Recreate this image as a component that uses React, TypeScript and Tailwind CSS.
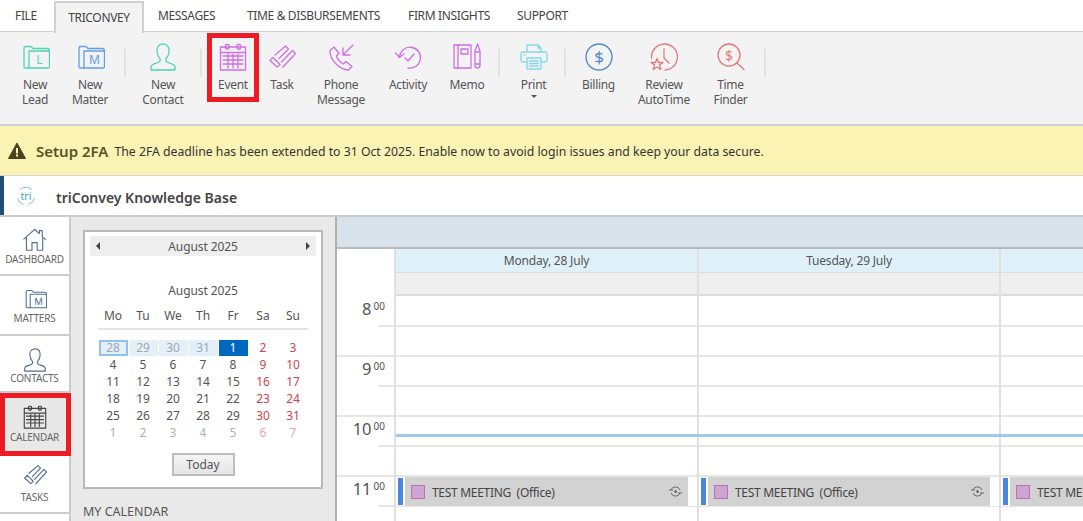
import React from "react";

type IconProps = { c: string };
const S = ({ c, children, w = 28, h = 28 }: { c: string; children: React.ReactNode; w?: number; h?: number }) => (
  <svg width={w} height={h} viewBox={`0 0 ${w} ${h}`} fill="none" stroke={c} strokeWidth={1.3} strokeLinejoin="round" strokeLinecap="round">
    {children}
  </svg>
);

const Folder = ({ c, letter }: { c: string; letter: string }) => (
  <S c={c} w={30} h={28}>
    <path d="M9 25H5.5Q4 25 4 23.5V5Q4 3.5 5.5 3.5H11L13 5.5H27Q29.5 5.5 29.5 8" />
    <path d="M9 25V8H28Q29.5 8 29.5 9.5V23.5Q29.5 25 28 25Z" />
    <text x="19.5" y="21" textAnchor="middle" fontSize="12" fill={c} stroke="none" fontFamily="'Noto Sans', sans-serif">{letter}</text>
  </S>
);

const Person = ({ c }: IconProps) => (
  <S c={c}>
    <path d="M2 27V24C2 21 6 20.5 9 19.5C11 18.8 11.5 17 11 15.5C9 13.5 8 10.5 8 7.5C8 3.5 10.5 1 14 1C17.5 1 20 3.5 20 7.5C20 10.5 19 13.5 17 15.5C16.5 17 17 18.8 19 19.5C22 20.5 26 21 26 24V27Z" />
  </S>
);

const Calendar = ({ c }: IconProps) => (
  <S c={c}>
    <rect x="1.5" y="4" width="25" height="23" />
    <path d="M1.5 9.5H26.5" />
    <rect x="6.5" y="1.5" width="3.5" height="4.5" rx="1" />
    <rect x="18" y="1.5" width="3.5" height="4.5" rx="1" />
    <path d="M4 13H24M4 17H24M4 21H24M9 11V25M14 11V25M19 11V25" />
  </S>
);

const Task = ({ c }: IconProps) => (
  <S c={c}>
    <path d="M2 17.5L5 14.5L12 21.5L9 24Z" />
    <path d="M7 12L17.5 3L20.5 6L11 15.5" />
    <path d="M13.5 19L24.5 7.5L27.5 10.5L15 24" />
  </S>
);

const Phone = ({ c }: IconProps) => (
  <S c={c}>
    <path d="M3 7.5L7 4L12 10.5L9.5 13C10.5 16 13.5 19.5 16.5 21L19 18.5L25 23.5L21.5 27C13 27 2.5 17 3 7.5Z" />
    <path d="M26 2L16 12M16 5V12H23" />
  </S>
);

const Activity = ({ c }: IconProps) => (
  <S c={c}>
    <path d="M5.5 14A10.5 10.5 0 1 1 14 25" />
    <path d="M1.5 10L5.5 14.5L10 11" />
    <path d="M11 15L14 18L20 11" />
  </S>
);

const Memo = ({ c }: IconProps) => (
  <S c={c}>
    <rect x="1" y="2" width="17" height="23" />
    <path d="M5 2V25" />
    <rect x="8" y="6" width="7" height="5" />
    <path d="M22 8L24.5 1L27 8V22.5Q27 25 24.5 25Q22 25 22 22.5ZM22 9H27M22 21H27" />
  </S>
);

const Printer = ({ c }: IconProps) => (
  <S c={c}>
    <path d="M7 9V2H18L21 5V9M18 2V5H21" />
    <path d="M7 19H3Q1 19 1 17V11Q1 9 3 9H25Q27 9 27 11V17Q27 19 25 19H21" />
    <rect x="7" y="15" width="14" height="11" />
    <path d="M9.5 18H18.5M9.5 20.5H18.5M9.5 23H18.5M4 12H5" />
  </S>
);

const Billing = ({ c }: IconProps) => (
  <S c={c}>
    <circle cx="14" cy="14" r="13" />
    <text x="14" y="20" textAnchor="middle" fontSize="17" fill={c} stroke="none" fontFamily="'Noto Sans', sans-serif">$</text>
  </S>
);

const AutoTime = ({ c }: IconProps) => (
  <S c={c}>
    <path d="M1.5 15A13 13 0 1 1 15 27" />
    <path d="M14 6V15L19 20" />
    <path d="M7 15.5L8.5 19.5H13L9.5 22L10.8 26.5L7 24L3.2 26.5L4.5 22L1 19.5H5.5Z" />
  </S>
);

const Finder = ({ c }: IconProps) => (
  <S c={c}>
    <circle cx="12" cy="12" r="11" />
    <path d="M20 20L27 26.5" />
    <text x="12" y="18" textAnchor="middle" fontSize="14" fill={c} stroke="none" fontFamily="'Noto Sans', sans-serif">$</text>
  </S>
);

const HomeIcon = () => (
  <S c="#4f6f8f">
    <path d="M1 13L13.5 1.5L19 6.5V3H22.5V10L26.5 13.5M4 11V26H10.5V17H16.5V26H23V11" />
  </S>
);

const Sep = ({ cls }: { cls: string }) => (
  <div className={`flex justify-center pt-[17px] ${cls}`}>
    <div className="h-[28px] w-[2px] bg-[#e2e2e2]" />
  </div>
);

const Item = ({ cls, icon, lines, red, caret }: { cls: string; icon: React.ReactNode; lines: string[]; red?: boolean; caret?: boolean }) => (
  <div className={`relative flex flex-col items-center pt-[11px] ${cls}`}>
    <div className="flex h-[28px] items-center justify-center">{icon}</div>
    <div className="mt-[6px] text-center text-[12px] leading-[15px] tracking-[-0.3px] text-[#555]">
      {lines.map((l) => (
        <div key={l} className="whitespace-nowrap">{l}</div>
      ))}
      {caret && (
        <div className="flex justify-center pt-[3px]">
          <div className="h-0 w-0 border-x-[3px] border-t-[3px] border-x-transparent border-t-[#555]" />
        </div>
      )}
    </div>
    {red && <div className="absolute inset-x-0 top-[1px] h-[69px] border-[5px] border-[#ed1c24]" />}
  </div>
);

const Ribbon = () => (
  <div className="flex h-[92px] bg-[#f3f3f3]">
    <div className="w-[8px]" />
    <Item cls="w-[54px]" icon={<Folder c="#4fd4b4" letter="L" />} lines={["New", "Lead"]} />
    <Item cls="w-[56px]" icon={<Folder c="#5f9ee8" letter="M" />} lines={["New", "Matter"]} />
    <Sep cls="w-[13px]" />
    <Item cls="w-[64px]" icon={<Person c="#4fd4b4" />} lines={["New", "Contact"]} />
    <Sep cls="w-[12px]" />
    <Item cls="w-[52px]" icon={<Calendar c="#d06fe6" />} lines={["Event"]} red />
    <Item cls="w-[46px]" icon={<Task c="#d06fe6" />} lines={["Task"]} />
    <Item cls="w-[72px]" icon={<Phone c="#d06fe6" />} lines={["Phone", "Message"]} />
    <Item cls="w-[62px]" icon={<Activity c="#d06fe6" />} lines={["Activity"]} />
    <Item cls="w-[56px]" icon={<Memo c="#d06fe6" />} lines={["Memo"]} />
    <Sep cls="w-[8px]" />
    <Item cls="w-[61px]" icon={<Printer c="#85d8e6" />} lines={["Print"]} caret />
    <Sep cls="w-[2px]" />
    <Item cls="w-[65px]" icon={<Billing c="#4f86d2" />} lines={["Billing"]} />
    <Item cls="w-[66px]" icon={<AutoTime c="#e57878" />} lines={["Review", "AutoTime"]} />
    <Item cls="w-[67px]" icon={<Finder c="#e57878" />} lines={["Time", "Finder"]} />
    <Sep cls="w-[2px]" />
  </div>
);

const Tabs = () => (
  <div className="flex h-[32px] items-center border-b border-[#d0d0d0] bg-white pl-[15px] pt-[1px] text-[12px] tracking-[-0.35px] text-[#444]">
    <span className="w-[39px]">FILE</span>
    <div className="-mb-[1px] flex h-[32px] w-[90px] items-center justify-center border-x-2 border-t-2 border-[#d0d0d0] bg-[#f3f3f3]">TRICONVEY</div>
    <span className="ml-[14px] w-[89px]">MESSAGES</span>
    <span className="w-[161px] whitespace-nowrap">TIME &amp; DISBURSEMENTS</span>
    <span className="w-[109px] whitespace-nowrap">FIRM INSIGHTS</span>
    <span>SUPPORT</span>
  </div>
);

const Alert = () => (
  <div className="flex h-[52px] items-center border-t-2 border-b border-t-[#cfcfcf] border-b-[#d8d8c8] bg-[#fbf3b4] pl-[8px]">
    <svg width="18" height="17" viewBox="0 0 18 17">
      <path d="M9 1L17.5 16.5H.5Z" fill="#4a4320" stroke="#4a4320" strokeLinejoin="round" />
      <rect x="8" y="6" width="2" height="5.5" fill="#fbf3b4" />
      <rect x="8" y="12.5" width="2" height="2" fill="#fbf3b4" />
    </svg>
    <span className="ml-[10px] pt-[1px] text-[15px] font-semibold text-[#5a5226]">Setup 2FA</span>
    <span className="ml-[6px] whitespace-nowrap pt-[4px] text-[12.25px] text-[#333]">The 2FA deadline has been extended to 31 Oct 2025. Enable now to avoid login issues and keep your data secure.</span>
  </div>
);

const Kb = () => (
  <div className="flex h-[41px] items-center border-b-2 border-[#cccccc] bg-white">
    <div className="h-full w-[4px] bg-[#1f4e79]" />
    <svg width="20" height="20" viewBox="0 0 20 20" className="ml-[12px]" fill="none">
      <path d="M4 3.5A9 9 0 0 1 16 3.5M18.5 12A9 9 0 0 1 12.5 18.5M7.5 18.5A9 9 0 0 1 1.5 12" stroke="#79c3ee" strokeWidth="1" />
      <text x="10" y="13.5" textAnchor="middle" fontSize="10.5" fill="#3f9fdc" fontFamily="'Noto Sans', sans-serif">tri</text>
    </svg>
    <span className="ml-[20px] pt-[3px] text-[14px] font-semibold text-[#444]">triConvey Knowledge Base</span>
  </div>
);

const Nav = ({ label, icon, cls, active, gap }: { label: string; icon: React.ReactNode; cls: string; active?: boolean; gap: string }) => (
  <div className={`relative flex flex-col items-center ${cls} ${active ? "bg-[#e8e8e8]" : "border-b-2 border-[#cccccc] bg-white"}`}>
    <div className="flex h-[28px] items-center [&_svg]:h-[24px] [&_svg]:w-[24px]">{icon}</div>
    <div className={`text-[10px] leading-[14px] tracking-[-0.2px] text-[#666] ${gap}`}>{label}</div>
    {active && <div className="absolute inset-y-0 left-0 -right-[2px] border-[5px] border-[#ed1c24]" />}
  </div>
);

const Sidebar = () => (
  <div className="w-[71px] shrink-0 border-r-2 border-[#cccccc] bg-white">
    <Nav label="DASHBOARD" cls="h-[59px] pt-[9px]" gap="-mt-[2px]" icon={<HomeIcon />} />
    <Nav label="MATTERS" cls="h-[60px] pt-[9px]" gap="-mt-[2px]" icon={<Folder c="#4f6f8f" letter="M" />} />
    <Nav label="CONTACTS" cls="h-[57px] pt-[10px]" gap="-mt-[3px]" icon={<Person c="#4f6f8f" />} />
    <Nav label="CALENDAR" cls="h-[63px] pt-[10px]" gap="-mt-[1px]" active icon={<Calendar c="#444" />} />
    <Nav label="TASKS" cls="h-[58px] pt-[5px]" gap="mt-[1px]" icon={<Task c="#4f6f8f" />} />
  </div>
);

type Cell = [string, string];
const g = "text-[#b0b0b0]";
const d = "text-[#555]";
const r = "text-[#d2434f]";
const pr = "text-[#eda5a5]";
const rows: Cell[][] = [
  [["4", d], ["5", d], ["6", d], ["7", d], ["8", d], ["9", r], ["10", r]],
  [["11", d], ["12", d], ["13", d], ["14", d], ["15", d], ["16", r], ["17", r]],
  [["18", d], ["19", d], ["20", d], ["21", d], ["22", d], ["23", r], ["24", r]],
  [["25", d], ["26", d], ["27", d], ["28", d], ["29", d], ["30", r], ["31", r]],
  [["1", g], ["2", g], ["3", g], ["4", g], ["5", g], ["6", pr], ["7", pr]],
];

const MiniCal = () => (
  <div className="h-[259px] w-[240px] border-2 border-[#b8b8b8] bg-white px-[5px] pt-[4px]">
    <div className="flex h-[20px] items-center justify-between bg-[#efefef] px-[6px] text-[12px] tracking-[-0.1px] text-[#555]">
      <div className="h-0 w-0 border-y-[4px] border-r-[4px] border-y-transparent border-r-[#444]" />
      <span className="pt-[2px]">August 2025</span>
      <div className="h-0 w-0 border-y-[4px] border-l-[4px] border-y-transparent border-l-[#444]" />
    </div>
    <div className="mt-[27px] text-center text-[12px] leading-[16px] tracking-[-0.1px] text-[#555]">August 2025</div>
    <div className="mx-[8px] mt-[8px]">
      <div className="grid grid-cols-7 border-b-2 border-[#e4e4e4] pb-[4px] text-center text-[12px] leading-[17px] text-[#555]">
        {["Mo", "Tu", "We", "Th", "Fr", "Sa", "Su"].map((x) => <span key={x}>{x}</span>)}
      </div>
      <div className="mt-[10px] grid grid-cols-7 text-center text-[12px] leading-[16px]">
        <div className="mx-[0.5px] border-2 border-[#8fc3ea] bg-[#e3eff9] leading-[12px] text-[#a0a8b0]">28</div>
        <div className="mx-[0.5px] bg-[#e3eff9] text-[#a0a8b0]">29</div>
        <div className="mx-[0.5px] bg-[#e3eff9] text-[#a0a8b0]">30</div>
        <div className="mx-[0.5px] bg-[#e3eff9] text-[#a0a8b0]">31</div>
        <div className="mx-[0.5px] bg-[#0067c0] text-white">1</div>
        <div className="text-[#d2434f]">2</div>
        <div className="text-[#d2434f]">3</div>
      </div>
      {rows.map((row, i) => (
        <div key={i} className="mt-[1px] grid grid-cols-7 text-center text-[12px] leading-[16px]">
          {row.map(([t, c], j) => <span key={j} className={c}>{t}</span>)}
        </div>
      ))}
    </div>
    <div className="mt-[12px] flex justify-center">
      <div className="flex h-[23px] w-[63px] items-center justify-center border-2 border-[#bdbdbd] bg-gradient-to-b from-[#f5f5f5] to-[#e4e4e4] text-[12px] text-[#555]">Today</div>
    </div>
  </div>
);

const Panel = () => (
  <div className="w-[266px] shrink-0 border-r-2 border-[#b0b0b0] bg-[#e9e9e9] pl-[12px] pt-[13px]">
    <MiniCal />
    <div className="mt-[14px] text-[12.5px] leading-[18px] text-[#555]">MY CALENDAR</div>
  </div>
);

const Recur = () => (
  <svg width="13" height="11" viewBox="0 0 13 11" fill="none" stroke="#666" strokeWidth="1">
    <path d="M2 4A4.8 4.8 0 0 1 11 4M11 7A4.8 4.8 0 0 1 2 7" />
    <path d="M0 4H4M9 7H13" />
    <circle cx="6.5" cy="5.5" r="1" fill="#666" />
  </svg>
);

const Meeting = ({ gray, clip }: { gray: string; clip?: boolean }) => (
  <div className="flex h-[29px] items-stretch">
    <div className="my-[1px] ml-[2px] w-[5px] bg-[#4a86e0]" />
    <div className={`ml-[2px] flex items-center overflow-hidden bg-[#d2d2d2] pl-[6px] ${gray}`}>
      <div className="h-[14px] w-[14px] shrink-0 border border-[#b870b8] bg-[#cfa4d0]" />
      <span className="ml-[7px] whitespace-pre pt-[2px] text-[12px] tracking-[-0.3px] text-[#444]">TEST MEETING  (Office)</span>
      {!clip && <div className="ml-auto mr-[6px] flex items-center"><Recur /></div>}
    </div>
  </div>
);

const DayCol = ({ title, cls, event }: { title: string; cls: string; event: React.ReactNode }) => (
  <div className={`border-r-2 border-[#e0e0e0] ${cls}`}>
    <div className="flex h-[24px] items-center justify-center whitespace-nowrap border-b border-[#dcdcdc] bg-[#dff0f9] text-[12px] tracking-[-0.2px] text-[#555]">{title}</div>
    <div className="h-[23px] border-b-2 border-[#dcdcdc] bg-[#efefef]" />
    <div className="h-[31px] border-b-2 border-[#e6e6e6]" />
    {[1, 2, 3, 4, 5].map((i) => (
      <div key={i} className="h-[30px] border-b-2 border-[#e6e6e6]" />
    ))}
    <div className="h-[30px] border-b border-[#e6e6e6]">{event}</div>
    <div className="h-[30px]" />
  </div>
);

const hours = ["8", "9", "10", "11"];

const Gutter = () => (
  <div className="w-[59px] shrink-0 border-r-2 border-[#e0e0e0] bg-white">
    <div className="h-[48px]" />
    {hours.map((h) => (
      <div key={h} className="h-[60px] border-b-2 border-[#e6e6e6]">
        <div className="relative h-[30px]">
          <div className="flex justify-end pr-[9px] pt-[1px] text-[#555]">
            <span className="text-[16.5px] leading-[22px]">{h}</span>
            <span className="ml-[2px] text-[10px] leading-[16px]">00</span>
          </div>
          <div className="absolute bottom-0 right-0 h-[2px] w-[16px] bg-[#e6e6e6]" />
        </div>
      </div>
    ))}
  </div>
);

const Main = () => (
  <div className="relative min-w-0 flex-1 overflow-hidden bg-white">
    <div className="h-[32px] border-b-2 border-[#b8b8b8] bg-[#d8e2ea]" />
    <div className="flex">
      <Gutter />
      <DayCol title="Monday, 28 July" cls="w-[303px] shrink-0" event={<Meeting gray="w-[283px]" />} />
      <DayCol title="Tuesday, 29 July" cls="w-[302px] shrink-0" event={<Meeting gray="w-[282px]" />} />
      <DayCol title="" cls="flex-1 border-r-0" event={<Meeting gray="flex-1" clip />} />
    </div>
    <div className="absolute left-[59px] right-0 top-[217px] h-[3px] bg-[#9cc9ec]" />
  </div>
);

export default function App() {
  return (
    <div className="h-[521px] w-[1083px] overflow-hidden bg-white font-['Noto_Sans',sans-serif]">
      <Tabs />
      <Ribbon />
      <Alert />
      <Kb />
      <div className="flex h-[304px]">
        <Sidebar />
        <Panel />
        <Main />
      </div>
    </div>
  );
}
